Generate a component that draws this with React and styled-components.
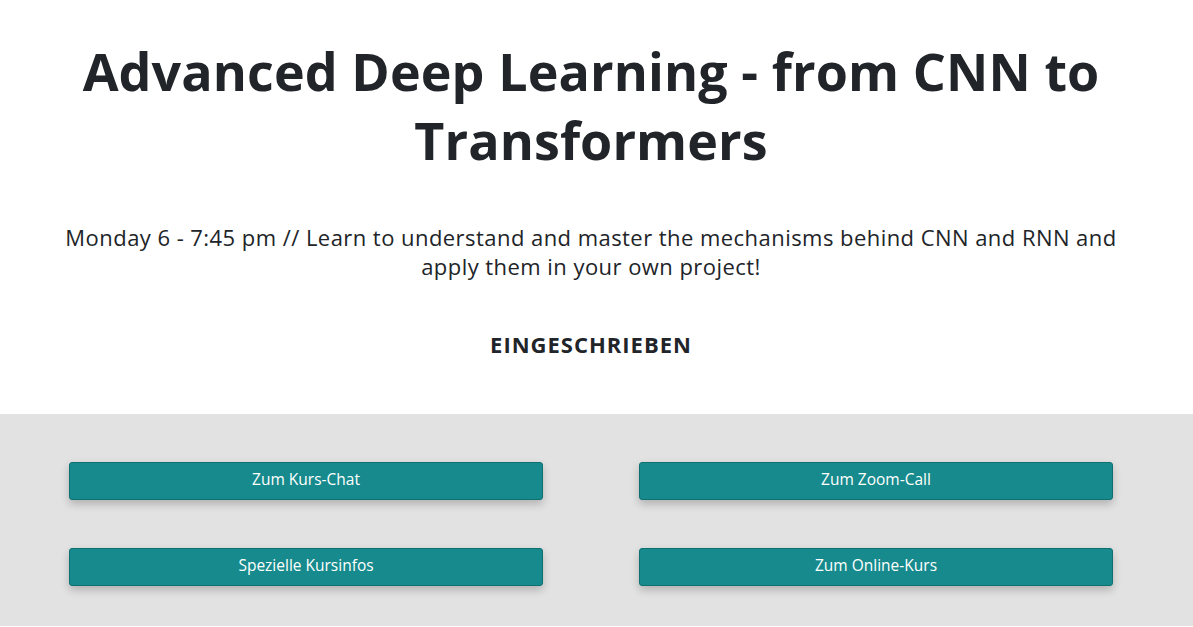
import React from "react";
import styled, { createGlobalStyle } from "styled-components";

const GlobalStyle = createGlobalStyle`
  body {
    margin: 0;
    background: #ffffff;
    font-family: "Open Sans", "Liberation Sans", sans-serif;
    color: #212428;
  }
`;

const Page = styled.div`
  width: 1182px;
`;

const Header = styled.header`
  height: 414px;
  box-sizing: border-box;
  padding-top: 36px;
  display: flex;
  flex-direction: column;
  align-items: center;
  text-align: center;
`;

const Title = styled.h1`
  margin: 0;
  font-size: 52px;
  line-height: 69px;
  font-weight: 700;
  letter-spacing: 0.1px;
  max-width: 1060px;
`;

const Lead = styled.p`
  margin: 49px 0 0;
  font-size: 22px;
  line-height: 29px;
  font-weight: 400;
  letter-spacing: 0.45px;
  max-width: 1070px;
`;

const Status = styled.div`
  margin-top: 48px;
  font-size: 22px;
  font-weight: 700;
  letter-spacing: 1px;
`;

const Links = styled.section`
  background: #e2e2e2;
  width: 1193px;
  padding: 48px 0 40px;
`;

const Grid = styled.div`
  width: 1044px;
  margin-left: 69px;
  display: grid;
  grid-template-columns: 474px 474px;
  column-gap: 96px;
  row-gap: 48px;
`;

const LinkButton = styled.a`
  display: flex;
  align-items: center;
  justify-content: center;
  height: 38px;
  box-sizing: border-box;
  padding-bottom: 4px;
  background: #168a8c;
  border: 1px solid #0f7072;
  border-radius: 3px;
  box-shadow: 0 4px 9px rgba(0, 0, 0, 0.22);
  color: #ffffff;
  font-size: 15.5px;
  text-decoration: none;
  cursor: pointer;
`;

const links = [
  "Zum Kurs-Chat",
  "Zum Zoom-Call",
  "Spezielle Kursinfos",
  "Zum Online-Kurs",
];

export default function App() {
  return (
    <Page>
      <GlobalStyle />
      <Header>
        <Title>Advanced Deep Learning - from CNN to Transformers</Title>
        <Lead>
          Monday 6 - 7:45 pm // Learn to understand and master the mechanisms
          behind CNN and RNN and apply them in your own project!
        </Lead>
        <Status>EINGESCHRIEBEN</Status>
      </Header>
      <Links>
        <Grid>
          {links.map((label) => (
            <LinkButton key={label}>{label}</LinkButton>
          ))}
        </Grid>
      </Links>
    </Page>
  );
}
